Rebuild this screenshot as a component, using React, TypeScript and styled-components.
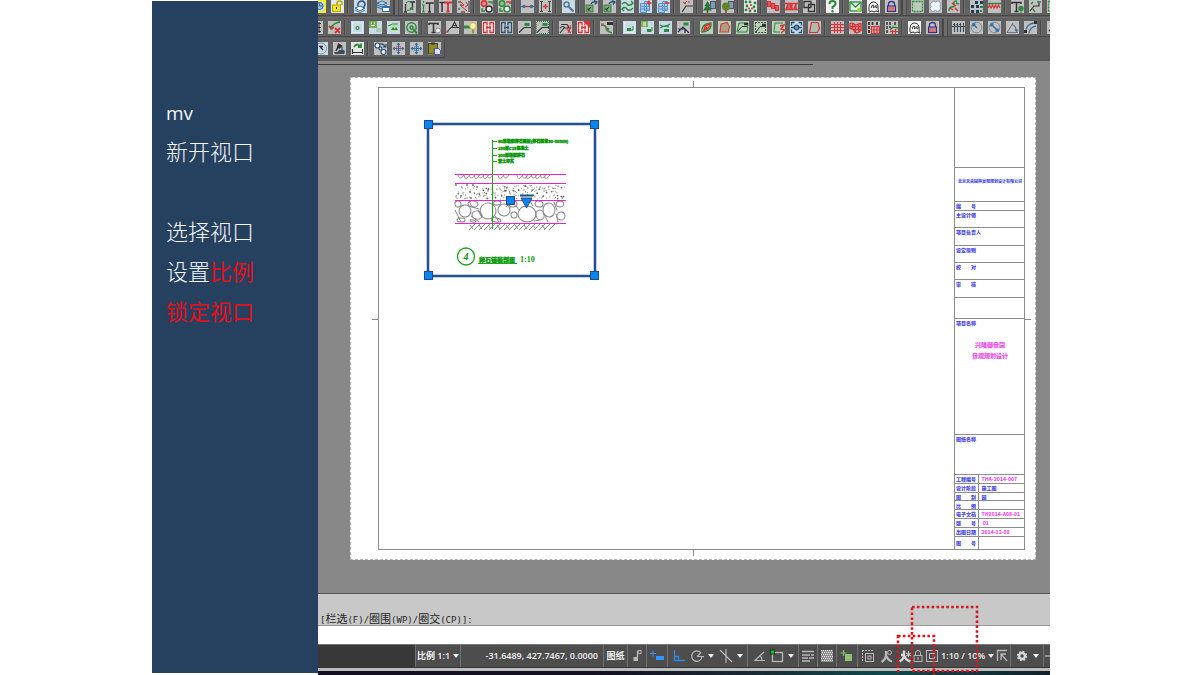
import React from "react";
import styled, { createGlobalStyle } from "styled-components";

const Global = createGlobalStyle`
  * { box-sizing: border-box; }
  body { margin: 0; background: #fff; overflow: hidden; font-family: "Noto Sans", "Noto Sans CJK SC", sans-serif; }
`;

const Slide = styled.div`
  position: relative;
  display: flex;
  min-height: 100vh;
  padding: 0 150px 0 152px;
  overflow: hidden;
`;

/* ---------- left notes ---------- */
const Notes = styled.aside`
  flex: 0 0 166px;
  margin: 1px 0 2px;
  padding: 89px 14px 0;
  background: #264060;
  color: #f4f7fa;
`;
const NoteLine = styled.p`
  margin: 0;
  height: 40px;
  font: 300 22px/40px "Noto Sans CJK SC", sans-serif;
  white-space: nowrap;
`;
const Command = styled.span`
  font: 400 19px/38px "Open Sans", sans-serif;
`;
const Alert = styled.span`
  color: #e0121c;
  font-weight: 400;
`;

/* ---------- application frame ---------- */
const AppFrame = styled.main`
  flex: 1;
  min-width: 0;
  display: flex;
  flex-direction: column;
  overflow: hidden;
`;
const Toolbars = styled.div`
  display: flex;
  flex-direction: column;
  align-items: flex-start;
  gap: 1px;
  height: 61px;
  background: #5b5b5b;
  overflow: hidden;
  flex: none;
`;
const ToolRow = styled.div<{ $shift: number; $first?: boolean; $short?: boolean }>`
  display: flex;
  flex: none;
  height: 20px;
  margin-top: ${(p) => (p.$first ? "-4px" : "0")};
  margin-left: -${(p) => p.$shift}px;
  min-width: ${(p) => (p.$short ? "0" : "110%")};
  padding: 3px 0 2px;
  border-top: 1px solid #6c6c6c;
  border-bottom: 1px solid #484848;
  border-right: 1px solid #484848;
  background: #616161;
`;
const ToolButton = styled.button<{ $tile: string }>`
  flex: none;
  width: 13px;
  height: 13px;
  margin: 0 3px 0 2px;
  padding: 0;
  border: 0;
  background: ${(p) => p.$tile};
  svg { display: block; }
`;
const Separator = styled.span`
  flex: none;
  width: 2px;
  height: 15px;
  margin: -1px 3px 0 0;
  border-left: 1px solid #484848;
  border-right: 1px solid #707070;
`;
const Grip = styled.span`
  flex: none;
  width: 6px;
  height: 17px;
  margin: -2px 2px 0 0;
  border-left: 2px solid #474747;
  border-right: 1px solid #505050;
  background: #6c6c6c;
`;

const G = "#2c8a3c";
const R = "#dc3036";
const B = "#2f6ea8";
const K = "#333";
const grey = "#c0c0c0";
const pale = "#c8dae6";
const mint = "#b9cfb9";
const white = "#e6e6e6";

const frameMark = (c: string) => (
  <g stroke={c} fill="none" strokeWidth="1.300">
    <path d="M1.500 1v11M11.500 1v11M1.500 1.500h3.500v3M11.500 1.500H8v3M1.500 11.500h3.500v-3M11.500 11.500H8v-3M4 6.500h5M5 5v3M8 5v3" />
  </g>
);
const leader = (c: string, dotted = false) => (
  <g fill="none" strokeWidth="1.100">
    <path d="M1 11.500L6 6.500h7" stroke={K} />
    <path d="M6.500 3.500h5" stroke={c} strokeWidth="3" />
    {dotted && <path d="M1 .5h11M12.500 1v11M3 12.500h9M.5 1v11" stroke={G} strokeDasharray="1 1" />}
  </g>
);
const crossArrows = (center: string) => (
  <g stroke={B} fill={B} strokeWidth="1.200">
    <path d="M6.500 2v9M2 6.500h9" />
    <path d="M6.500 .5L8.500 3h-4zM6.500 12.500L4.500 10h4zM.5 6.500L3 4.500v4zM12.500 6.500L10 8.500v-4z" stroke="none" />
    <rect x="4.500" y="4.500" width="4" height="4" fill="none" stroke={center} strokeDasharray="1 1" />
  </g>
);
const picture = (
  <g>
    <rect x="3" y="4" width="8" height="6" fill="#b9dcb0" />
    <path d="M4 9l2-3 2 2 1-2 2 3z" fill={G} />
  </g>
);
const swirls = (
  <path d="M1 4q3-3 5 0t6-1M1 9q3-3 5 0t6-1M10 1l2 2-2 2M3 7L1 9l2 2" fill="none" stroke={G} strokeWidth="1.400" />
);
const blockMove = (
  <g>
    <rect x="1" y="5" width="7" height="7" fill="#7da077" stroke={G} />
    <path d="M3 10l3-3M3 8v2h2" stroke={K} fill="none" />
    <path d="M6 4q1-3 5-2M9 .5l3 1.500-2 2.500" stroke="#25507c" fill="none" strokeWidth="1.300" />
  </g>
);
const ghost = (
  <path d="M2 11q-1-9 4.500-9T11 10l1 2-3-1-2 1-2-1-3 1M4.500 8q0-3 1.500-3t.5 3M8 8q0-3 1.300-2.500T9.500 8" fill="none" stroke={K} strokeWidth="1" />
);
const padlock = (
  <g>
    <path d="M3.500 6V4q0-2.500 3-2.500t3 2.500v2" fill="none" stroke="#3d3a86" strokeWidth="1.400" />
    <rect x="2.500" y="6" width="8" height="5.500" fill="#d9a0a6" stroke="#2c2f86" strokeWidth="1.100" />
    <path d="M3 8h7M3 10h7" stroke="#c94a50" />
  </g>
);
const sheets = (plus: boolean) => (
  <g>
    <path d="M1.500 3.500h6v9h-6zM5.500 1.500h5v9h-5z" fill="#a9cbe9" stroke="#5c93c8" />
    <path d="M2 6.500h8M2 9h8" stroke="#5c93c8" />
    <path d={plus ? "M7.500 3h5M10 .5v5" : "M7.500 3h5"} stroke={R} strokeWidth="1.600" />
  </g>
);
const redGrid = <path d="M0 3.500h13M0 6.500h13M0 9.500h13M3.500 1v11M6.500 1v11M9.500 1v11" stroke={R} strokeWidth="1.100" />;
const letterT = <path d="M1 4V2.500h9V4M5.500 2.500V11M3.500 11.500h4" stroke={K} strokeWidth="1.500" fill="none" />;

const art: Record<string, [string, React.ReactNode]> = {
  layerState: ["#f2ea35", <g><rect x="2" y="2" width="9" height="9" fill={pale} /><circle cx="6.500" cy="6" r="3.500" fill="#9dc0dc" stroke={B} /><path d="M6.500 3v3h3" stroke={B} fill="none" /></g>],
  layerUnlock: [white, <g><path d="M6 5V3q0-2 2.500-2T11 3v2" stroke="#b3a800" fill="none" strokeWidth="1.500" /><rect x="1.500" y="5" width="8" height="6.500" fill="#efe42a" stroke="#b3a800" /><path d="M5.500 7v2" stroke={K} /></g>],
  layerStack: [pale, <g><path d="M1 8l5-2 5 2-5 3zM1 10l5 2.500 5-2.500" fill="#fff" stroke={B} /><path d="M4 6q-1-5 5-5M9 1q4 3 0 7" fill="none" stroke="#31537c" strokeWidth="1.600" /></g>],
  layerDoc: [grey, <g><path d="M0 3l5-2 5 2-5 2zM0 5l5 2 5-2M0 7l5 2" fill="#bcd4ea" stroke={B} /><rect x="5.500" y="6.500" width="7" height="5" fill="#fff" stroke={B} /><path d="M5 7h8" stroke={B} strokeWidth="2" /></g>],
  textSwap: [grey, <g fill="none"><path d="M2.500 4v8M1 12h3M9.500 2v7M7 2h5" stroke={K} strokeWidth="1.300" /><path d="M3 3q3-3 5 0M4 10q4 1 5-2M7 9l2-2 1 3" stroke={G} strokeWidth="1.200" /></g>],
  textUp: [grey, <g fill="none"><path d="M8.500 3v9M5.500 4V3H12v1M7 12h3" stroke={K} strokeWidth="1.400" /><path d="M2.500 5v7M1 5h3M1 12h3M2.500 1v2" stroke={G} strokeWidth="1.200" /></g>],
  textRed: [grey, <g fill="none"><path d="M.5 2.500h5M3 2v10" stroke={K} strokeWidth="1.500" /><path d="M5 2.500h8M9 2v10M7.500 11.500h3" stroke={R} strokeWidth="1.900" /></g>],
  textList: [grey, <g fill="none"><path d="M1 2h3M3 5h2M1 9h2M4 12h4M12 1v11" stroke={K} /><path d="M3 1l4 4-3 1 6 5M9 2l2 3-3 2" stroke={R} /></g>],
  swapRed: [grey, <g fill="none" strokeWidth="1.500"><circle cx="4" cy="3.500" r="2.700" fill="#e58b8b" stroke={R} /><circle cx="9" cy="9" r="3" fill="#eee" stroke={K} /><path d="M8 2h4v2M2 8v3h3" stroke={G} /></g>],
  swapGreen: [grey, <g fill="none" strokeWidth="1.500"><circle cx="4" cy="3.500" r="2.700" fill="#8fc48f" stroke={G} /><circle cx="9" cy="9" r="3" fill="#eee" stroke={G} /><path d="M8 2h4v2" stroke={R} /><path d="M2 8v3h3" stroke={G} /></g>],
  dotsLine: [grey, <g><path d="M0 6.500h13" stroke={B} /><path d="M5 6.500h4" stroke={R} strokeWidth="1.500" /><circle cx="3" cy="6.500" r="1.700" fill={B} /><circle cx="10.500" cy="6.500" r="1.700" fill={B} /></g>],
  spacing: [grey, <g fill="none"><path d="M1 1.500h3M2.500 1v10M1 11.500h3M9 1.500h3M10.500 1v10M9 11.500h3" stroke="#35503c" strokeWidth="1.100" /><path d="M4 6.500h5M6.500 4v5" stroke={R} strokeWidth="1.300" /></g>],
  wrench: [pale, <g><circle cx="4.500" cy="4.500" r="2.500" fill="none" stroke="#56789c" strokeWidth="1.500" /><path d="M6.500 6.500l5 5" stroke="#56789c" strokeWidth="2.200" /></g>],
  blockMove: [grey, blockMove],
  greenArrows: [pale, swirls],
  sheetsAdd: [pale, sheets(true)],
  sheetsRemove: [pale, sheets(false)],
  slope: [grey, <g fill="none"><path d="M2 12l4-6h7" stroke={K} strokeWidth="1.200" /><path d="M3 2l3 2M7 1L4 4M8 2h2" stroke={R} /></g>],
  tree: [grey, <g><rect x="7.500" y="1.500" width="5" height="7" fill="#789cc4" stroke="#555" /><path d="M4.500 1l3 5H6l3 4.500H0L3 6H1.500z" fill="#1f7a36" /><path d="M4.500 10v3" stroke="#6b4423" strokeWidth="1.500" /></g>],
  shrub: [grey, <g><rect x="7.500" y="1.500" width="5" height="7" fill="#789cc4" stroke="#555" /><circle cx="5" cy="6.500" r="4" fill="#4b8c31" /><circle cx="4" cy="6" r="1.200" fill="#c2601f" /><circle cx="7" cy="8" r="1" fill="#c2601f" /><path d="M5 10v3" stroke="#6b4423" strokeWidth="1.500" /></g>],
  planting: [white, <g>{[[2, 2], [6, 2], [11, 3], [3, 6], [10, 7], [2, 10], [6, 11], [11, 11]].map(([x, y]) => <circle key={x * 20 + y} cx={x} cy={y} r="1.400" fill={G} />)}<circle cx="7" cy="5" r="1" fill={R} /><circle cx="5" cy="8.500" r="1" fill={R} /><circle cx="8" cy="8.500" r="1" fill={R} /></g>],
  blocksA: [grey, <path d="M.5 1.500h3v5h-3zM4.500 3.500h3v5h-3zM8.500 5.500h3v5h-3zM2 1v5M6 3v6M10 5v6" fill="none" stroke={R} strokeWidth="1.200" />],
  blocksB: [grey, <path d="M0 3.500h13M0 9.500h13M1 9l2-5v5M5 9V4l2 5V4M9 9l2-5v5" fill="none" stroke={R} strokeWidth="1.300" />],
  overlap: [grey, <path d="M1 1.500h7v6H1zM5.500 4.500h6v7h-6z" fill="none" stroke={K} strokeWidth="1.300" />],
  help: ["#f2f2f2", <g><path d="M3.500 4q0-3 3-3t3 2.500Q9.500 5.500 6.500 7v2" fill="none" stroke={G} strokeWidth="2" /><circle cx="6.500" cy="11.300" r="1.200" fill={G} /></g>],
  mail: [white, <g><rect x="1" y="2" width="11" height="9" fill="#e5f3e5" stroke={G} strokeWidth="1.300" /><path d="M1 2l5.500 5L12 2" fill="none" stroke={G} strokeWidth="1.300" /><circle cx="10" cy="10" r="2" fill="#9bcf3f" /></g>],
  ghost: ["#f2f2f2", ghost],
  padlock: [grey, padlock],
  region: [grey, <rect x="1.500" y="1.500" width="10" height="10" fill="#b9cdb9" stroke={G} strokeWidth="1.300" strokeDasharray="2 1" />],
  cloud: [grey, <path d="M3 2q2-2 3.500 0Q9-.5 11 2q2 2 0 4 2 3-1 5-2 1-3.500-.5Q4 13 2 10.500 0 9 2 6.500 0 4 3 2z" fill="#eef3fa" stroke="#8794bd" />],
  chain: [grey, <g fill="none" strokeWidth="1.500"><path d="M10 1q-4 0-3 3t-2 3-3 4M9 3l3 1" stroke={G} /><path d="M5 3l4 3M3 8l3 2M8 8l3 3" stroke={R} /></g>],
  array: [grey, <g fill="#1d3d5c"><path d="M5 1h3v3H5zM10 1h3v3h-3zM1 5h3v3H1zM6 5h3v3H6zM1 10h3v3H1zM6 10h3v3H6z" /><path d="M10 6h3v2h-3zM10 10h2v2h-2z" fill={G} /></g>],
  zigzag: [grey, <g fill="none"><path d="M0 3.500h13" stroke={G} strokeWidth="1.500" /><path d="M0 8l1.500-3L3 8l1.500-3L6 8l1.500-3L9 8l1.500-3L12 8" stroke={R} strokeWidth="1.200" /></g>],
  textTree: [grey, <g>{letterT}<circle cx="10" cy="8.500" r="2.700" fill={G} /><path d="M10 10v3" stroke={G} strokeWidth="1.200" /></g>],
  leaderBox: [grey, <g fill="none"><path d="M1 11l4-5h5V2" stroke={K} strokeWidth="1.200" /><path d="M8 2h4M4 9l2 3M2 4l2-2" stroke={G} strokeWidth="1.500" /></g>],
  listDark: [grey, <path d="M2 2.500h9M2 6.500h9M2 10.500h9M9 1v11" stroke={K} strokeWidth="1.200" />],
  deleteMark: [grey, <g fill="none" strokeWidth="1.600"><path d="M12 1Q5 2 3 7M1 5l2 3 3-2" stroke={G} /><path d="M1 5l4 3" stroke={R} /><path d="M7 7l5 5M12 7l-5 5" stroke={R} strokeWidth="1.900" /></g>],
  imageBlue: [pale, <g fill="none"><rect x="1.500" y="1.500" width="10" height="10" stroke="#dfebf3" /><circle cx="6.500" cy="7" r="1.500" stroke={G} strokeWidth="1.200" /></g>],
  imageGreen: [pale, <g><rect x="0" y="0" width="8" height="7" fill="#6fae55" /><path d="M2 2h1M5 2h1M2 4.500h4" stroke="#fff" /><rect x="7" y="7" width="5" height="4" fill="#aacbb5" /></g>],
  imageSwirl: [pale, <g>{picture}<path d="M1 5q4-3 10-2" stroke={G} fill="none" /></g>],
  ringFind: [grey, <g fill="none" stroke={G} strokeWidth="1.500"><circle cx="6.500" cy="6.500" r="4.700" /><circle cx="6.500" cy="6.500" r="1.500" /><path d="M8 8l4 4.500" strokeWidth="2" /></g>],
  textCircle: [grey, <g>{letterT}<circle cx="10" cy="9.500" r="2.500" fill="#eee" stroke="#888" /></g>],
  leaderA: [grey, <g fill="none" stroke={K} strokeWidth="1.100"><path d="M1 11l4-4.500h8M6 6l2.500-5L11 6M7 4.500h3" /><path d="M0 12l3-1-2-2z" fill={R} stroke="none" /></g>],
  bulb: [grey, <g><path d="M0 6h7" stroke={G} strokeWidth="3" /><circle cx="9" cy="5" r="3.300" fill="#fff4a8" stroke="#c9b94d" /><path d="M9 8.500v4" stroke="#a29034" strokeWidth="2" /></g>],
  frameRed: [white, frameMark(R)],
  frameBlue: [grey, frameMark("#2b5275")],
  leaderGreen: [grey, leader(G)],
  leaderDotted: [grey, leader(G, true)],
  leaderRed: [grey, <g fill="none"><path d="M1 12l4-5h6M2 3.500h6l2 3M1 7q3-3 5 0" stroke={K} strokeWidth="1.200" /><path d="M8 8l4 4M8 5h4M9 12l3-6" stroke={R} strokeWidth="1.200" /></g>],
  frameArrow: [white, <g>{frameMark(R)}<path d="M6 0h7v7z" fill={R} /></g>],
  curve: [grey, <g fill="none"><path d="M1 4q5 0 5 3t6 5" stroke={G} strokeWidth="1.500" /><path d="M7 2.500h6" stroke={K} strokeWidth="3" /><circle cx="8" cy="8" r="1.300" fill={G} /><path d="M1 3h3M6 6l2 2" stroke={R} /></g>],
  windowGreen: [pale, <g><rect x="1.500" y="1.500" width="10" height="10" fill="none" stroke="#dfebf3" /><path d="M8 9h2V5" stroke={G} fill="none" /><rect x="4" y="7" width="4" height="3" fill={G} /></g>],
  windowPair: [pale, <g><rect x="0" y="0" width="7" height="6" fill="#7db354" /><path d="M2 2h3M2 4h3" stroke="#fff" /><path d="M9 10h2V6" stroke={G} fill="none" /><rect x="6" y="8" width="4" height="3" fill={G} /></g>],
  windowSwirl: [pale, <g><path d="M1 4q5 3 10-1M1 7q4-3 9-1" stroke={G} fill="none" strokeWidth="1.200" /><rect x="5" y="8" width="5" height="3" fill={G} /></g>],
  leaderText: [grey, <g fill="none"><path d="M1 11l5-5 6 6M1 8h7v4" stroke="#26324a" strokeWidth="1.200" /><path d="M6.500 3h5" stroke={G} strokeWidth="3" /></g>],
  areaCurve: [mint, <g fill="none" strokeWidth="1.300"><path d="M2 11q-1-8 9-9 1 8-9 9z" stroke={G} /><path d="M4 9q0-5 6-6-1 6-6 6M3 11l4-5" stroke={R} fill="#f0a074" /></g>],
  areaBrown: [mint, <path d="M3 3l6-1.500 2.500 4L10.500 11H2z" fill="#b59b85" stroke="#c5483c" strokeWidth="1.200" />],
  areaLeader: [mint, <g fill="none"><path d="M2 10l4-4.500h6" stroke={K} /><path d="M1 11h10l1-9H3z" stroke={G} /><path d="M8 3h4" stroke={K} strokeWidth="2.500" /></g>],
  areaDark: [mint, <g fill="none"><path d="M2 11l4-5.500h6" stroke={K} /><path d="M1 1.500h11M1 11.500h11M1.500 1v11M11.500 5v7" stroke="#3c5a40" strokeDasharray="2 1" /><path d="M8 4h4" stroke={K} strokeWidth="2.500" /></g>],
  areaZig: [mint, <g fill="none"><path d="M2 11l1-9h8M2 11h6" stroke={G} /><path d="M8 5l4-1-3 4 4 1-4 3" stroke={R} strokeWidth="1.300" /></g>],
  gearFrame: [pale, <g stroke="#1f4e78" fill="none" strokeWidth="1.300"><path d="M1.500 4.500v-3h3M8.500 1.500h3v3M11.500 8.500v3h-3M4.500 11.500h-3v-3M1 6.500h11" /><circle cx="6.500" cy="6.500" r="2.300" fill="#6e93b6" /></g>],
  areaOutline: [grey, <path d="M3.500 1.500H10l1.500 6-2 4h-8l1-5z" fill="#a9bfa9" stroke={R} strokeWidth="1.200" />],
  gridRed: [grey, redGrid],
  gridBlob: [grey, <path d="M1 2.500q3-1 5 1.500 3-1 6-1.500v7q-3 3-6 2-1-4-5-4zM1 5.500h11M4 8.500h8M3.500 2v6M6.500 4v8M9.500 3v8" fill="none" stroke={R} strokeWidth="1.300" />],
  gridBlack: [grey, <g><path d="M2 1v11M5.500 1v3M10 1v3" stroke={K} strokeWidth="1.800" strokeDasharray="3 1" /><path d="M4.500 5.500h8v7h-8zM4 9h8M7 5v7M10 5v7" stroke={R} fill="none" strokeWidth="1.200" /></g>],
  gridGreen: [grey, <g><path d="M2 1v11M5 1v6M10 1v3" stroke={K} strokeWidth="1.500" strokeDasharray="3 1" /><path d="M5 9l3-3 5 1" stroke={G} fill="none" strokeWidth="1.500" /><path d="M5 10.500h8M7.500 9v4M10.500 8v5" stroke={R} strokeWidth="1.200" /></g>],
  fence: [grey, <path d="M0 5.500h13M2.500 2v9M5.500 2v9M8.500 2v9M11.500 2v9M1 3.500l2-1M4 3.500l2-1M7 3.500l2-1" stroke="#3c4c57" strokeWidth="1.100" />],
  radius: [grey, <g fill="none" stroke="#7c8994"><circle cx="6.500" cy="6.500" r="5.300" /><path d="M3 3l4 4M3 5.500V3h2.500" stroke={B} strokeWidth="1.500" /></g>],
  diameter: [grey, <g fill="none" stroke="#7c8994"><circle cx="6.500" cy="6.500" r="5.300" /><path d="M3 3l7 7M3 5.500V3h2.500M10 7.500V10H7.500" stroke={B} strokeWidth="1.500" /></g>],
  angle: [grey, <g fill="none" stroke="#6d7a85"><path d="M1 11.500h11M1 11.500L7 2" /><path d="M6 3.500q4 1 4.500 7M9 8.500l1.500 2 1.500-2" stroke="#41749c" strokeWidth="1.200" /></g>],
  arc: [grey, <g fill="none" stroke="#41749c" strokeWidth="1.300"><path d="M2 9Q3 3 10 2M5 12Q6 6 12 5" /><rect x="0" y="9" width="3" height="3" fill={K} stroke="none" /><rect x="10" y="0" width="3" height="3" fill={K} stroke="none" /></g>],
  line: [grey, <path d="M2 10l9-8" stroke={K} strokeWidth="1.300" />],
  compass: [pale, <g fill="none" stroke="#7d92a6"><circle cx="6" cy="6.500" r="5.500" /><path d="M8 8L5 4.500h3" stroke={K} strokeWidth="1.400" /></g>],
  stampStack: [grey, <g><path d="M5 1l5 3-4 3-2-2z" fill={K} /><path d="M5 5L3 9" stroke={K} strokeWidth="1.500" /><path d="M9 5v3" stroke={B} strokeWidth="1.500" /><path d="M1 10h4l1-2h5l1 2-1 2H2z" fill="#3b4a54" /></g>],
  refreshDim: [white, <g fill="none"><path d="M3 5q3-5 7 0M10 1.500V5H7" stroke={G} strokeWidth="1.800" /><path d="M1.500 7v5M11.500 7v5M1 10.500h11" stroke={K} strokeWidth="1.200" /></g>],
  linkObjects: [grey, <g fill="#eaf1f8" stroke="#284d74" strokeWidth="1.200"><path d="M6 2q4-1 5 3M12 2v3H9" fill="none" /><circle cx="3.500" cy="3.500" r="2.500" /><circle cx="6.500" cy="6.500" r="1.500" /><circle cx="9.500" cy="10" r="2.500" /></g>],
  moveRed: [grey, crossArrows(R)],
  moveBlue: [grey, crossArrows(B)],
  paste: [grey, <g><rect x=".5" y="1.500" width="9" height="10.500" fill="#8c8a2a" stroke="#4c4a18" /><path d="M3 1.500h4" stroke={K} strokeWidth="2" /><path d="M6.500 6.500h4l2 2v4h-6z" fill="#dfe3ff" stroke="#4a4f9d" /></g>],
};

const row1 = "layerState layerUnlock | layerStack | layerDoc # textSwap textUp textRed textList | swapRed swapGreen | dotsLine spacing | wrench | blockMove blockMove greenArrows sheetsAdd sheetsRemove | slope | tree shrub | planting | blocksA blocksB overlap | help | mail ghost padlock # region cloud chain | array zigzag | textTree leaderBox region";
const row2 = "listDark deleteMark | imageBlue imageGreen imageSwirl ringFind | textCircle leaderA bulb frameRed frameBlue leaderGreen leaderDotted | leaderRed frameArrow | curve | windowGreen windowPair windowSwirl leaderText | areaCurve areaBrown areaLeader areaDark areaZig gearFrame areaOutline | gridRed gridBlob gridBlack gridGreen | ghost padlock # fence radius diameter angle arc | line";
const row3 = "compass stampStack refreshDim | linkObjects moveRed moveBlue paste";

const Tools = ({ list }: { list: string }) => (
  <>
    {list.split(" ").map((name, i) => {
      if (name === "|") return <Separator key={i} />;
      if (name === "#") return <Grip key={i} />;
      const [tile, drawing] = art[name];
      return (
        <ToolButton key={i} $tile={tile} type="button" aria-label={name}>
          <svg width="13" height="13" viewBox="0 0 13 13">{drawing}</svg>
        </ToolButton>
      );
    })}
  </>
);

/* ---------- drawing canvas ---------- */
const Canvas = styled.section`
  flex: 1;
  display: flex;
  flex-direction: column;
  padding: 3px 14px 33px 0;
  background: #888;
  border-bottom: 1px solid #555;
`;
const CanvasRule = styled.div`
  flex: none;
  width: 69%;
  height: 1px;
  margin-bottom: 12px;
  background: #3a3a3a;
`;
const Paper = styled.div`
  position: relative;
  flex: 1;
  display: flex;
  margin-left: 32px;
  padding: 9px 10px 9px 27px;
  background: #fff;
  border: 1px dashed #b4b4b4;
`;
const Tick = styled.i<{ $side: "top" | "bottom" | "left" | "right" }>`
  position: absolute;
  background: #8a8a8a;
  ${(p) =>
    p.$side === "top" || p.$side === "bottom"
      ? `${p.$side}: 3px; left: 50%; width: 1px; height: 6px;`
      : `top: 50%; height: 1px; width: 6px; ${p.$side}: ${p.$side === "left" ? 21 : 4}px;`}
`;
const SheetFrame = styled.div`
  flex: 1;
  display: flex;
  border: 1px solid #8c8c8c;
`;
const ModelSpace = styled.div`
  flex: 1;
  padding: 35px 0 0 48px;
`;
const Viewport = styled.div`
  position: relative;
  width: 169px;
  height: 154px;
  border: 2px solid #2c4f8c;
  box-shadow: 0 0 0 1px #bcd0ee, inset 0 0 0 1px #bcd0ee;
  svg { display: block; }
`;
const Handle = styled.i<{ $v: "top" | "bottom"; $h: "left" | "right" }>`
  position: absolute;
  ${(p) => p.$v}: -5px;
  ${(p) => p.$h}: -5px;
  width: 9px;
  height: 9px;
  background: #0a84f2;
  border: 1px solid #1c4f87;
`;

const speckles = Array.from({ length: 200 }, (_, i) => {
  const x = (i * 61.8 + ((i * i) % 17)) % 109;
  const y = (i * 7.3 + ((i * i * 3) % 11)) % 14;
  return { x: 29 + x, y: 61 + y, r: i % 6 === 0 ? 0.9 : 0.5 };
});
const stones: number[][] = [
  [31, 80, 3, 3], [38, 87, 6, 6], [34, 96, 4, 2], [46, 80, 5, 3], [50, 91, 5, 4], [61, 87, 8, 8], [70, 79, 4, 2],
  [77, 86, 6, 6], [69, 96, 5, 2], [86, 80, 4, 3], [87, 91, 3, 3], [100, 90, 9, 8], [112, 80, 4, 3], [113, 91, 4, 5],
  [122, 86, 6, 7], [133, 80, 4, 3], [134, 92, 4, 4], [46, 97, 3, 1],
];
const pebbles = [34, 40, 45, 50, 54, 59, 63, 74, 79, 93, 98, 102, 107, 111, 116, 120];

const Detail = () => (
  <svg width="165" height="150" viewBox="0 0 165 150" fill="none">
    <g transform="translate(-2 -1)">
      <g stroke="#8e8e8e" strokeWidth="0.900">
        {pebbles.map((x, i) => (
          <path key={x} d={`M${x - 3} 51q1 ${4 + (i % 2)} 3 3t3-3`} />
        ))}
      </g>
      <g fill="#6c6c6c">
        {speckles.map((s, i) => (
          <circle key={i} cx={s.x} cy={s.y} r={s.r} />
        ))}
      </g>
      <g stroke="#858585">
        {stones.map(([x, y, a, b], i) => (
          <ellipse key={i} cx={x} cy={y} rx={a} ry={b} transform={`rotate(${((i * 37) % 30) - 15} ${x} ${y})`} />
        ))}
        <path d="M28 86l6 12M42 77l3 6 7 2M44 92l8 6M54 92l-3-6M68 92l4 6M82 79l-3 4M89 82l4 5M106 82l-3-5M107 97l6-1M117 90l4 8M129 90l2 8M127 78l3 8" />
      </g>
      <path d={Array.from({ length: 17 }, (_, i) => `M${42 + i * 5} 106l6-6`).join("")} stroke="#888" />
      <path d={Array.from({ length: 9 }, (_, i) => `M${43 + i * 9} 101l3 4`).join("")} stroke="#888" />
      <path d="M28 50.500h111M28 59.500h111M28 76.500h111M28 99.500h111" stroke="#f020d4" />
      <path d="M65.500 16v89M65 17.500h5M65 24.500h5M65 31.500h5M65 37.500h5" stroke="#1da51d" />
      <g fill="#0b980b" stroke="#0b980b" strokeWidth="0.400" fontFamily="'Noto Sans CJK SC', sans-serif" fontWeight="700" fontSize="4">
        <text x="71" y="19">60厚级配卵石面层(卵石粒径30-50mm)</text>
        <text x="71" y="26">150厚C15混凝土</text>
        <text x="71" y="33">200厚级配碎石</text>
        <text x="71" y="39">素土夯实</text>
      </g>
      <circle cx="39" cy="132.500" r="8.500" stroke="#1da51d" strokeWidth="1.300" />
      <g fill="#0b980b" fontFamily="'Noto Sans CJK SC', sans-serif" fontWeight="700">
        <text x="39" y="136" fontSize="10" textAnchor="middle" fontFamily="'Liberation Serif', serif" fontStyle="italic">4</text>
        <text x="52" y="138" fontSize="6" stroke="#0b980b" strokeWidth="0.400">卵石铺装剖面</text>
        <text x="93" y="138" fontSize="8" fontFamily="'Liberation Serif', serif">1:10</text>
      </g>
      <path d="M51 139.500h39" stroke="#1da51d" />
      <rect x="79.500" y="72.500" width="8" height="8" fill="#0a84f2" stroke="#1c4f87" />
      <path d="M93 71.500h13" stroke="#1c4f87" strokeWidth="2" />
      <path d="M94 74h11l-5.500 10z" fill="#0a84f2" stroke="#1c4f87" />
    </g>
  </svg>
);

const TitleBlock = styled.div`
  flex: 0 0 70px;
  display: flex;
  flex-direction: column;
  border-left: 1px solid #8c8c8c;
  color: #4a4ae8;
  font: 900 5px/8px "Noto Sans CJK SC", sans-serif;
`;
const TitleCell = styled.div<{ $h?: number }>`
  flex: ${(p) => (p.$h ? `0 0 ${p.$h}px` : "1")};
  padding-left: 1px;
  border-bottom: 1px solid #8c8c8c;
  white-space: pre;
  overflow: hidden;
`;
const Company = styled.div`
  padding-top: 9px;
  font-size: 4px;
  text-align: center;
`;
const Project = styled.div`
  margin-top: 12px;
  color: #f24df2;
  font-size: 6px;
  line-height: 11px;
  text-align: center;
`;
const SheetTable = styled.table`
  width: 100%;
  height: 74px;
  border-collapse: collapse;
  th, td { padding: 0 0 0 1px; font: inherit; line-height: 7px; text-align: left; white-space: pre; border-bottom: 1px solid #8c8c8c; }
  th { width: 23px; border-right: 1px solid #8c8c8c; }
  td { padding-left: 3px; }
  tr:last-child th, tr:last-child td { border-bottom: 0; height: 13px; }
`;
const Pink = styled.span`
  color: #f24df2;
`;
const sheetRows: [string, string, boolean?][] = [
  ["工程编号", "THA-2014-007", true],
  ["设计阶段", "施工图"],
  ["图　　别", "园"],
  ["比　　例", ""],
  ["电子文档", "TH2014-A08-01", true],
  ["版　　号", " 01", true],
  ["出图日期", "2014-12-08", true],
  ["图　　号", ""],
];

/* ---------- command line ---------- */
const History = styled.div`
  flex: none;
  height: 32px;
  padding: 17px 0 0 2px;
  background: #c8c8c8;
  border-bottom: 1px solid #989898;
  color: #262626;
  font: 9px/14px "DejaVu Sans Mono", monospace;
  white-space: nowrap;
`;
const Han = styled.span`
  font: 11px/14px "Noto Sans CJK SC", sans-serif;
`;
const CommandInput = styled.input`
  flex: none;
  display: block;
  width: 100%;
  height: 18px;
  padding: 0 4px;
  border: 0;
  background: #fff;
  font: 10px "DejaVu Sans Mono", monospace;
`;

/* ---------- status bar ---------- */
const StatusBar = styled.footer`
  flex: none;
  display: flex;
  height: 24px;
  padding-left: 97px;
  background: #383838;
  border-top: 1px solid #777;
  border-bottom: 1px solid #333;
  overflow: hidden;
`;
const StatusGroup = styled.div<{ $w: number; $grow?: boolean }>`
  flex: ${(p) => (p.$grow ? 1 : 0)} 0 ${(p) => p.$w}px;
  display: flex;
  align-items: center;
  justify-content: space-evenly;
  background: #4d4d4d;
  border-left: 1px solid #717171;
  color: #f2f2f2;
  font: 600 9px/22px "Open Sans", "Noto Sans CJK SC", sans-serif;
  white-space: nowrap;
`;
const StatusButton = styled.button`
  display: flex;
  align-items: center;
  gap: 3px;
  padding: 0;
  border: 0;
  background: none;
  color: inherit;
  font: inherit;
  svg { display: block; }
`;
const Coordinates = styled.output`
  flex: 1;
  padding-right: 5px;
  text-align: right;
`;
const Caret = () => (
  <svg width="6" height="4" viewBox="0 0 6 4"><path d="M0 0h6L3 4z" fill="#f2f2f2" /></svg>
);
const W = "#b8b8b8";
const glyphs: Record<string, React.ReactNode> = {
  snap: <g stroke={W} fill="none"><path d="M7.500 2v7" strokeWidth="1.300" /><rect x="8" y="1.500" width="3" height="3" /><rect x="4" y="8.500" width="3.500" height="3" fill={W} /></g>,
  input: <g stroke="#2f97ff" fill="#2f97ff"><path d="M0 4.500h6M3 1.500v6" /><rect x="6.500" y="7.500" width="7" height="3" /></g>,
  ortho: <g stroke="#2f86e8" fill="none" strokeWidth="1.300"><path d="M2.500 1v10.500H13M2.500 7.500h4v4" /></g>,
  polar: <g stroke={W} fill="none" strokeWidth="1.200"><path d="M11 4A5.200 5.200 0 1 0 12 8M7 7.500h7M7 7.500l4-4M7 7.500" /></g>,
  iso: <g stroke={W} fill="none" strokeWidth="1.200"><path d="M1 1l12 12M7 0v14" /></g>,
  track: <g stroke={W} fill="none" strokeWidth="1.200"><path d="M12 3L3 11.500h10M8 7q2 1 2 4" /></g>,
  osnap: <g fill="none"><rect x="2.500" y="3.500" width="10" height="9" stroke={W} strokeWidth="1.300" /><rect x="0.500" y="1" width="4" height="4" fill="#1dbf30" stroke="#0b3d12" /></g>,
  weight: <path d="M1 2.500h12M1 6h8M10 6h3M1 9h6M8 9h5M1 12h8" stroke={W} strokeWidth="1.700" />,
  hatch: <g><rect x="1" y="1" width="12" height="12" fill="#8c8c8c" />{Array.from({ length: 36 }, (_, i) => <rect key={i} x={1 + (i % 6) * 2 + (Math.floor(i / 6) % 2)} y={1 + Math.floor(i / 6) * 2} width="1" height="1" fill="#f1f1f1" />)}</g>,
  cycle: <g><rect x="5" y="5" width="7" height="7" fill="#8fc073" /><path d="M3.500 1v6M.5 4h6" stroke="#7fc06a" strokeWidth="1.200" /></g>,
  filter: <g stroke={W} fill="none"><path d="M1 1.500h12M1.500 1v12" strokeDasharray="2 1" /><rect x="4.500" y="4.500" width="8" height="8" /><rect x="7" y="7" width="3" height="3" /></g>,
  person: <g stroke={W} fill="none"><path d="M6 2v4q0 4-4.500 7M6.500 7q1 4 5.500 5.500" strokeWidth="2.300" /><circle cx="9.500" cy="3.500" r="2" /></g>,
  auto: <g stroke="#d8d8d8" fill="none"><path d="M6 1.500v5q0 3.500-4.500 6M6.500 7q1 4 6 5.500M3 6h3" strokeWidth="2.400" /><path d="M10.500 2v6M8 4l5 3M13 4L8 7" /></g>,
  lock: <g stroke={W} fill="none"><path d="M4.500 6V4q0-2.500 2.500-2.500T9.500 4v2" /><rect x="3" y="6.500" width="8" height="6" /><path d="M7 8v3" /></g>,
  maximize: <g stroke={W} fill="none"><rect x="1.500" y="1.500" width="11" height="11" /><rect x="4.500" y="4.500" width="5" height="5" /></g>,
  sync: <g stroke={W} fill="none" strokeWidth="1.300"><path d="M2 1.500h10M2.500 1v11M6 11V5h5M6 5l6 7" /></g>,
  gear: <g><circle cx="7" cy="7" r="3" fill="none" stroke="#d8d8d8" strokeWidth="2.400" /><circle cx="7" cy="7" r="4.500" fill="none" stroke="#d8d8d8" strokeWidth="1.400" strokeDasharray="1.770 1.770" /></g>,
  plus: <path d="M1 7h12" stroke={W} strokeWidth="1.300" />,
};
const Glyph = ({ name, width = 14 }: { name: string; width?: number }) => (
  <StatusButton type="button" aria-label={name}>
    <svg width={width} height="14" viewBox={`${(14 - width) / 2} 0 ${width} 14`}>{glyphs[name]}</svg>
  </StatusButton>
);
const Menu = ({ label }: { label: string }) => (
  <StatusButton type="button" aria-label={label}><Caret /></StatusButton>
);
const WindowEdge = styled.div`
  flex: none;
  height: 7px;
  background: linear-gradient(to right, #14101f 0 38%, #1b2b33 60%, #0d4a4c 78%, #14202a);
  border-top: 3px solid #bdbdbd;
`;
const Callouts = styled.svg`
  position: absolute;
  right: 120px;
  bottom: 0;
  pointer-events: none;
`;

const infoRows: [string, number][] = [
  ["编　　号", 9],
  ["主设计师", 17],
  ["项目负责人", 18],
  ["设定原则", 17],
  ["校　　对", 17],
  ["审　　核", 18],
  ["", 21],
];

export default function App() {
  return (
    <Slide>
      <Global />
      <Notes>
        <NoteLine><Command>mv</Command></NoteLine>
        <NoteLine>新开视口</NoteLine>
        <NoteLine />
        <NoteLine>选择视口</NoteLine>
        <NoteLine>设置<Alert>比例</Alert></NoteLine>
        <NoteLine><Alert>锁定视口</Alert></NoteLine>
      </Notes>
      <AppFrame>
        <Toolbars>
          <ToolRow $shift={7} $first><Tools list={row1} /></ToolRow>
          <ToolRow $shift={10}><Tools list={row2} /></ToolRow>
          <ToolRow $shift={5} $short><Tools list={row3} /></ToolRow>
        </Toolbars>
        <Canvas>
          <CanvasRule />
          <Paper>
            <Tick $side="top" /><Tick $side="bottom" /><Tick $side="left" /><Tick $side="right" />
            <SheetFrame>
              <ModelSpace>
                <Viewport>
                  <Detail />
                  <Handle $v="top" $h="left" /><Handle $v="top" $h="right" />
                  <Handle $v="bottom" $h="left" /><Handle $v="bottom" $h="right" />
                </Viewport>
              </ModelSpace>
              <TitleBlock>
                <TitleCell $h={80} />
                <TitleCell $h={34}><Company>北京天央园林景观规划设计有限公司</Company></TitleCell>
                {infoRows.map(([label, h], i) => (
                  <TitleCell key={i} $h={h}>{label}</TitleCell>
                ))}
                <TitleCell>项目名称<Project>兴隆御景园<br />景观规划设计</Project></TitleCell>
                <TitleCell $h={40}>图纸名称</TitleCell>
                <SheetTable>
                  <tbody>
                    {sheetRows.map(([label, value, pink]) => (
                      <tr key={label}>
                        <th scope="row">{label}</th>
                        <td>{pink ? <Pink>{value}</Pink> : value}</td>
                      </tr>
                    ))}
                  </tbody>
                </SheetTable>
              </TitleBlock>
            </SheetFrame>
          </Paper>
        </Canvas>
        <History>
          [<Han>栏选</Han>(F)/<Han>圈围</Han>(WP)/<Han>圈交</Han>(CP)]:
        </History>
        <CommandInput aria-label="命令" />
        <StatusBar>
          <StatusGroup $w={45}><StatusButton type="button">比例 1:1 <Caret /></StatusButton></StatusGroup>
          <StatusGroup $w={143} $grow><Coordinates>-31.6489, 427.7467, 0.0000</Coordinates></StatusGroup>
          <StatusGroup $w={24}><StatusButton type="button">图纸</StatusButton></StatusGroup>
          <StatusGroup $w={19}><Glyph name="snap" /></StatusGroup>
          <StatusGroup $w={21}><Glyph name="input" /></StatusGroup>
          <StatusGroup $w={80}><Glyph name="ortho" /><Glyph name="polar" /><Menu label="极轴" /><Glyph name="iso" /><Menu label="等轴测" /></StatusGroup>
          <StatusGroup $w={51}><Glyph name="track" /><Glyph name="osnap" /><Menu label="对象捕捉" /></StatusGroup>
          <StatusGroup $w={19}><Glyph name="weight" /></StatusGroup>
          <StatusGroup $w={19}><Glyph name="hatch" /></StatusGroup>
          <StatusGroup $w={21}><Glyph name="cycle" /></StatusGroup>
          <StatusGroup $w={153}>
            <Glyph name="filter" width={16} /><Glyph name="person" width={18} /><Glyph name="auto" /><Glyph name="lock" width={10} /><Glyph name="maximize" />
            <StatusButton type="button">1:10 / 10% <Caret /></StatusButton>
            <Glyph name="sync" width={12} />
          </StatusGroup>
          <StatusGroup $w={33}><Glyph name="gear" /><Menu label="工作空间" /></StatusGroup>
          <StatusGroup $w={7}><Glyph name="plus" /></StatusGroup>
        </StatusBar>
        <WindowEdge />
      </AppFrame>
      <Callouts width="190" height="75" viewBox="0 0 190 75" fill="none" stroke="#d8171e" strokeWidth="2.600" strokeDasharray="2.600 2.300">
        <rect x="22" y="7" width="65" height="64" />
        <rect x="8" y="36" width="36" height="46" />
      </Callouts>
    </Slide>
  );
}
